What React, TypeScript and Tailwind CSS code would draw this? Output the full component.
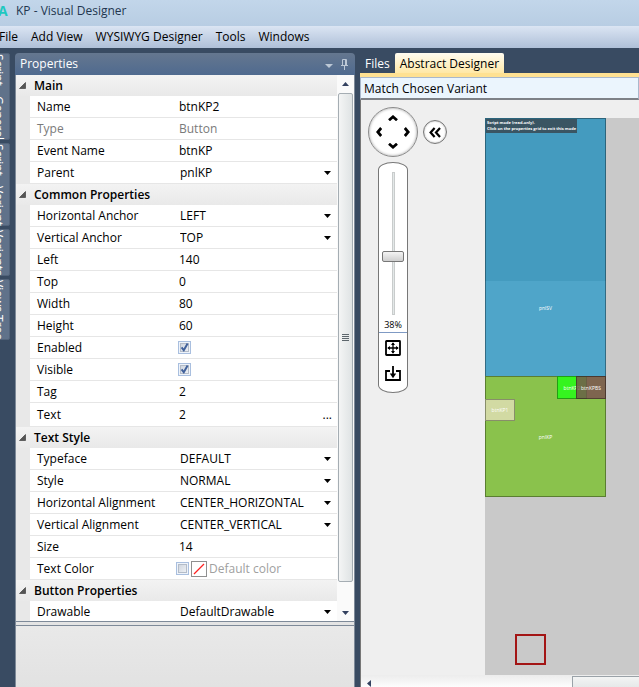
import { useState } from 'react'
import type { ReactNode } from 'react'
import clsx from 'clsx'

type Kind = 'text' | 'readonly' | 'select' | 'check' | 'more' | 'color'

interface Prop {
  label: string
  value: string
  kind: Kind
}

const groups: { title: string; props: Prop[] }[] = [
  {
    title: 'Main',
    props: [
      { label: 'Name', value: 'btnKP2', kind: 'text' },
      { label: 'Type', value: 'Button', kind: 'readonly' },
      { label: 'Event Name', value: 'btnKP', kind: 'text' },
      { label: 'Parent', value: 'pnlKP', kind: 'select' },
    ],
  },
  {
    title: 'Common Properties',
    props: [
      { label: 'Horizontal Anchor', value: 'LEFT', kind: 'select' },
      { label: 'Vertical Anchor', value: 'TOP', kind: 'select' },
      { label: 'Left', value: '140', kind: 'text' },
      { label: 'Top', value: '0', kind: 'text' },
      { label: 'Width', value: '80', kind: 'text' },
      { label: 'Height', value: '60', kind: 'text' },
      { label: 'Enabled', value: 'true', kind: 'check' },
      { label: 'Visible', value: 'true', kind: 'check' },
      { label: 'Tag', value: '2', kind: 'text' },
      { label: 'Text', value: '2', kind: 'more' },
    ],
  },
  {
    title: 'Text Style',
    props: [
      { label: 'Typeface', value: 'DEFAULT', kind: 'select' },
      { label: 'Style', value: 'NORMAL', kind: 'select' },
      { label: 'Horizontal Alignment', value: 'CENTER_HORIZONTAL', kind: 'select' },
      { label: 'Vertical Alignment', value: 'CENTER_VERTICAL', kind: 'select' },
      { label: 'Size', value: '14', kind: 'text' },
      { label: 'Text Color', value: 'Default color', kind: 'color' },
    ],
  },
  {
    title: 'Button Properties',
    props: [{ label: 'Drawable', value: 'DefaultDrawable', kind: 'select' }],
  },
]

const menu = ['File', 'Add View', 'WYSIWYG Designer', 'Tools', 'Windows']

function CheckBox({ id, on }: { id: string; on: boolean }) {
  const [checked, setChecked] = useState(on)
  return (
    <span className="grid size-[13px] shrink-0">
      <input
        id={id}
        type="checkbox"
        checked={checked}
        onChange={(e) => setChecked(e.target.checked)}
        className="col-start-1 row-start-1 size-[13px] appearance-none border border-[#a9bfdf] bg-linear-to-br from-[#c9d0da] to-[#f4f6f9] shadow-[inset_0_0_0_1px_#eef3fa,inset_0_0_0_2px_#b4bcc8]"
      />
      {checked && (
        <svg viewBox="0 0 13 13" className="pointer-events-none col-start-1 row-start-1 size-[13px]">
          <path d="M3.6 6.4 5.8 9.3 9.6 2.6" fill="none" stroke="#41619b" strokeWidth="2" />
        </svg>
      )}
    </span>
  )
}

function Editor({ id, prop }: { id: string; prop: Prop }) {
  if (prop.kind === 'select') {
    return (
      <span className="grid w-full items-center">
        <select id={id} className="col-start-1 row-start-1 w-full appearance-none pl-[15px] outline-none">
          <option>{prop.value}</option>
        </select>
        <svg viewBox="0 0 7 4" className="pointer-events-none col-start-1 row-start-1 mr-[6px] h-1 w-[7px] justify-self-end">
          <path d="M0 0H7L3.5 4Z" />
        </svg>
      </span>
    )
  }
  if (prop.kind === 'check') {
    return (
      <span className="pl-[13px]">
        <CheckBox id={id} on />
      </span>
    )
  }
  if (prop.kind === 'color') {
    return (
      <span className="flex items-center gap-[2px] pl-[11px] text-[#a0a0a0]">
        <CheckBox id={id} on={false} />
        <button aria-label="Pick color" className="size-4 border border-[#8f8f8f] bg-white">
          <svg viewBox="0 0 14 14" className="size-[14px]">
            <path d="M2 12 12 2" stroke="#ff2020" strokeWidth="1.3" />
          </svg>
        </button>
        {prop.value}
      </span>
    )
  }
  return (
    <>
      <input
        id={id}
        defaultValue={prop.value}
        readOnly={prop.kind === 'readonly'}
        className={clsx('w-full min-w-0 pl-[14px] outline-none', prop.kind === 'readonly' && 'text-[#7a7a7a]')}
      />
      {prop.kind === 'more' && <button className="pr-[5px]">...</button>}
    </>
  )
}

function PropertyGrid() {
  return (
    <div className="min-w-0 flex-1 overflow-hidden bg-[#e8e8e8]">
      {groups.map((group) => (
        <section key={group.title}>
          <h2 className="flex h-[21px] items-center bg-linear-to-b from-[#f3f3f3] to-[#e9e9e9] font-semibold">
            <button className="flex items-center gap-[8px] pl-[3px]">
              <svg viewBox="0 0 7 7" className="size-[7px]">
                <path d="M6.5 .5V6.5H.5Z" fill="#555" stroke="#333" strokeWidth=".6" />
              </svg>
              {group.title}
            </button>
          </h2>
          {group.props.map((prop) => {
            const id = prop.label.toLowerCase().replace(' ', '-')
            return (
              <div
                key={prop.label}
                className={clsx(
                  'ml-[14px] flex items-center border-b border-[#e6e6e6] bg-white',
                  prop.kind === 'more' ? 'h-6' : 'h-[22px]',
                )}
              >
                <label
                  htmlFor={id}
                  className={clsx('w-[135px] shrink-0 pl-[7px] whitespace-nowrap', prop.kind === 'readonly' && 'text-[#7a7a7a]')}
                >
                  {prop.label}
                </label>
                <Editor id={id} prop={prop} />
              </div>
            )
          })}
        </section>
      ))}
    </div>
  )
}

function VerticalScrollBar() {
  return (
    <div className="flex w-[17px] shrink-0 flex-col items-center bg-[#fafafa]">
      <button aria-label="Scroll up" className="flex h-[18px] items-center">
        <svg viewBox="0 0 7 4" className="h-1 w-[7px]">
          <path d="M0 4H7L3.5 0Z" fill="#33415f" />
        </svg>
      </button>
      <div className="flex w-[15px] flex-1 items-center justify-center rounded-xs border border-[#a5adb3] bg-linear-to-r from-[#f4f5f5] to-[#dfe3e4]">
        <svg viewBox="0 0 7 7" className="size-[7px]">
          <path d="M0 .5H7M0 2.5H7M0 4.5H7M0 6.5H7" stroke="#5d666c" />
        </svg>
      </div>
      <button aria-label="Scroll down" className="flex h-[39px] items-center pt-[23px]">
        <svg viewBox="0 0 7 4" className="h-1 w-[7px]">
          <path d="M0 0H7L3.5 4Z" fill="#33415f" />
        </svg>
      </button>
    </div>
  )
}

function PropertiesPanel() {
  return (
    <aside className="flex w-[340px] shrink-0 flex-col">
      <header className="flex h-[22px] items-center rounded-t-sm bg-linear-to-b from-[#65778f] to-[#4f6a8f] px-[5px] text-white">
        <h1 className="flex-1">Properties</h1>
        <button aria-label="Panel menu" className="pt-1 pr-2">
          <svg viewBox="0 0 8 4" className="h-1 w-2">
            <path d="M0 0H8L4 4Z" fill="#bcc8d6" />
          </svg>
        </button>
        <button aria-label="Pin panel" className="pr-[2px]">
          <svg viewBox="0 0 7 11" className="h-[11px] w-[7px]" fill="none" stroke="#bcc8d6">
            <path d="M1.5 6.5V.5H5.5V6.5M4.5 1V6M0 6.5H7M3.5 7V11" />
          </svg>
        </button>
      </header>
      <div className="flex h-[547px] overflow-hidden border-x border-b border-[#7e8a99]">
        <PropertyGrid />
        <VerticalScrollBar />
      </div>
      <div className="h-[3px] border-x border-[#7e8a99] bg-[#e4e4e4]" />
      <div className="flex-1 border-x border-t border-[#7e8a99] bg-linear-to-b from-[#e9e9e9] to-[#e2e2e2]" />
    </aside>
  )
}

function SideTab({ className, children }: { className: string; children: ReactNode }) {
  return (
    <button
      className={clsx(
        'w-6 rounded-r-xs border border-[#52637a] bg-[#60728a] whitespace-nowrap text-white [writing-mode:vertical-rl]',
        className,
      )}
    >
      {children}
    </button>
  )
}

function Chevron({ className }: { className: string }) {
  return (
    <svg viewBox="0 0 10 6" className={className} fill="none" stroke="#000" strokeWidth="2.8">
      <path d="M1 5.2 5 1.8 9 5.2" />
    </svg>
  )
}

function NavTools() {
  return (
    <div className="absolute top-[7px] left-[7px]">
      <div className="flex items-center gap-[5px]">
        <div className="grid size-[50px] grid-cols-3 place-items-center rounded-full border border-[#8a8a8a] bg-white p-[3px] shadow-[inset_0_0_3px_#999]">
          <button aria-label="Pan up" className="col-start-2">
            <Chevron className="h-[6px] w-[10px]" />
          </button>
          <button aria-label="Pan left" className="col-start-1 row-start-2">
            <Chevron className="h-[6px] w-[10px] -rotate-90" />
          </button>
          <button aria-label="Pan right" className="col-start-3 row-start-2">
            <Chevron className="h-[6px] w-[10px] rotate-90" />
          </button>
          <button aria-label="Pan down" className="col-start-2 row-start-3">
            <Chevron className="h-[6px] w-[10px] rotate-180" />
          </button>
        </div>
        <button
          aria-label="Collapse tools"
          className="flex size-6 items-center justify-center rounded-full border border-[#777] bg-white shadow-[inset_0_0_2px_#999]"
        >
          <svg viewBox="0 0 12 11" className="h-[11px] w-3" fill="none" stroke="#000" strokeWidth="2.2">
            <path d="M5.6 1 1.6 5.5 5.6 10M11 1 7 5.5 11 10" />
          </svg>
        </button>
      </div>
      <div className="mt-[5px] ml-[10px] flex w-[30px] flex-col items-center rounded-[15px/8px] border border-[#777] bg-white pt-[9px] pb-[11px]">
        <div className="grid h-[143px] w-[22px] justify-items-center">
          <input type="range" aria-label="Zoom" defaultValue={38} className="col-start-1 row-start-1 h-full w-full opacity-0 [writing-mode:vertical-lr]" />
          <div className="pointer-events-none col-start-1 row-start-1 h-full w-[3px] border border-[#c9cccc] bg-[#e3e8e8]" />
          <div className="pointer-events-none col-start-1 row-start-1 mt-[79px] h-[11px] w-[22px] rounded-xs border border-[#777] bg-linear-to-b from-[#f4f4f4] to-[#cfcfcf]" />
        </div>
        <span className="mt-[2px] w-full border-b border-[#7f9ac4] text-center text-[9px] leading-[15px]">38%</span>
        <button aria-label="Fit to screen" className="mt-[7px]">
          <svg viewBox="0 0 16 16" className="size-4" fill="none" stroke="#000">
            <rect x="1" y="1" width="14" height="14" rx=".5" strokeWidth="1.8" />
            <path d="M8 3V13M3 8H13" strokeWidth="1.3" />
            <path d="M8 2.2 10 5H6ZM8 13.8 10 11H6ZM2.2 8 5 6V10ZM13.8 8 11 6V10Z" fill="#000" stroke="none" />
          </svg>
        </button>
        <button aria-label="Load layout" className="mt-[10px]">
          <svg viewBox="0 0 16 15" className="h-[15px] w-4" fill="none" stroke="#000" strokeWidth="1.8">
            <path d="M5 5H1V14H15V5H11M8 0V10" />
            <path d="M8 12.2 11.2 7.6H4.8Z" fill="#000" stroke="none" />
          </svg>
        </button>
      </div>
    </div>
  )
}

function View({ className, children }: { className: string; children?: ReactNode }) {
  return (
    <div className={clsx('absolute flex items-center justify-center border border-black/35 text-[5px] text-white', className)}>
      {children}
    </div>
  )
}

function DesignerCanvas() {
  return (
    <div className="relative flex-1 overflow-hidden bg-[#efefef]">
      <NavTools />
      <div className="absolute top-[18px] right-0 bottom-0 left-[124px] bg-[#c9c9c9]">
        <View className="top-0 left-0 h-[259px] w-[121px] bg-[#4fa5c9]" />
        <View className="top-0 left-0 h-[163px] w-[121px] border-b-0 bg-[#449bbf]" />
        <View className="top-[121px] left-0 h-[137px] w-[121px] border-0">pnlSV</View>
        <div className="absolute top-px left-px bg-[#3a5563] px-px pt-px pb-px text-[4px] leading-[6px] font-bold whitespace-nowrap text-white">
          <p>Script mode (read-only).</p>
          <p>Click on the properties grid to exit this mode</p>
        </div>
        <View className="top-[258px] left-0 h-[121px] w-[121px] bg-[#8ac24c]">pnlKP</View>
        <View className="top-[258px] left-[72px] h-[23px] w-[30px] bg-[#35f41f]">btnKP2</View>
        <View className="top-[258px] left-[91px] h-[23px] w-[30px] bg-[#7a4e50]/80">btnKPBS</View>
        <View className="top-[281px] left-0 h-[22px] w-[30px] border-black/20 bg-[#d2daa3]">btnKP1</View>
        <div className="absolute top-[516px] left-[30px] size-[31px] border-2 border-[#a31515]" />
      </div>
    </div>
  )
}

function HorizontalScrollBar() {
  return (
    <div className="flex h-3 items-stretch overflow-hidden bg-linear-to-b from-[#ececec] to-[#fdfdfd]">
      <button aria-label="Scroll left" className="pt-1 pl-[6px]">
        <svg viewBox="0 0 4 7" className="h-[7px] w-1">
          <path d="M4 0V7L0 3.5Z" fill="#33415f" />
        </svg>
      </button>
      <div className="mt-px ml-auto w-[67px] border-t border-l border-[#9aa2a8] bg-linear-to-b from-[#f3f4f4] to-[#e6e9e9]" />
    </div>
  )
}

export default function App() {
  return (
    <div className="flex h-screen flex-col overflow-hidden bg-[#394b62] font-['Open_Sans',sans-serif] text-[12px] leading-4 text-black">
      <div className="flex h-[26px] shrink-0 items-center bg-linear-to-b from-[#c2d6ea] to-[#b8cde3] pb-1 text-[#22364f]">
        <span className="-ml-[2px] w-[18px] text-[14px] font-bold text-[#1fc8c0]">A</span>
        KP - Visual Designer
      </div>
      <nav className="flex h-[22px] shrink-0 items-center gap-[13px] bg-linear-to-b from-[#dbe5f3] to-[#afc0d8]">
        {menu.map((item) => (
          <button key={item} className="whitespace-nowrap first:-ml-px">
            {item}
          </button>
        ))}
      </nav>

      <div className="flex min-h-0 flex-1 pt-[5px]">
        <div className="-ml-[14px] flex w-[29px] shrink-0 flex-col gap-[3px]">
          <SideTab className="h-[87px]">Script - General</SideTab>
          <SideTab className="h-[83px]">Script - Variant</SideTab>
          <SideTab className="h-[47px]">Variants</SideTab>
          <SideTab className="h-[61px]">Views Tree</SideTab>
        </div>

        <PropertiesPanel />

        <main className="ml-[5px] flex min-w-0 flex-1 flex-col">
          <div role="tablist" className="flex h-5 shrink-0">
            <button role="tab" aria-selected="false" className="px-[5px] pt-[2px] text-white">
              Files
            </button>
            <button role="tab" aria-selected="true" className="rounded-t-xs bg-linear-to-b from-[#fffcf0] to-[#ffe8a6] px-[5px] pt-[2px]">
              Abstract Designer
            </button>
          </div>
          <div className="h-1 shrink-0 bg-[#ffe192]" />
          <button className="h-[23px] shrink-0 border border-b-2 border-[#a9b8cc] border-b-[#7d8187] bg-[#ebf5fd] pt-px pl-[3px] text-left">
            Match Chosen Variant
          </button>
          <div className="flex min-h-0 flex-1 flex-col border-l border-[#777]">
            <DesignerCanvas />
            <HorizontalScrollBar />
          </div>
        </main>
      </div>
    </div>
  )
}
